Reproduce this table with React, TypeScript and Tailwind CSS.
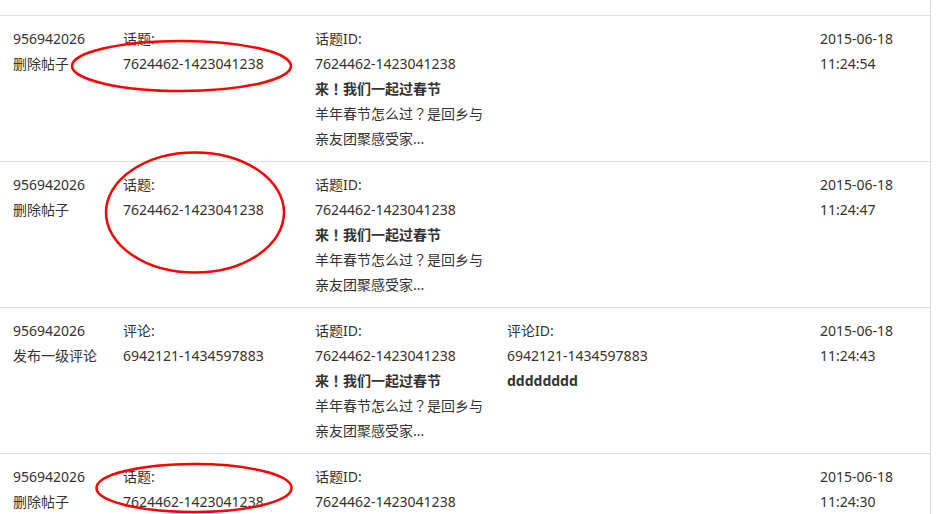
import type React from "react"

interface Post {
  uid: string
  action: string
  label: string
  labelId: string
  topicId: string
  title: string
  summary: string[]
  commentId?: string
  comment?: string
  date: string
  time: string
}

const posts: Post[] = [
  {
    uid: "956942026",
    action: "删除帖子",
    label: "话题:",
    labelId: "7624462-1423041238",
    topicId: "7624462-1423041238",
    title: "来！我们一起过春节",
    summary: ["羊年春节怎么过？是回乡与", "亲友团聚感受家..."],
    date: "2015-06-18",
    time: "11:24:54",
  },
  {
    uid: "956942026",
    action: "删除帖子",
    label: "话题:",
    labelId: "7624462-1423041238",
    topicId: "7624462-1423041238",
    title: "来！我们一起过春节",
    summary: ["羊年春节怎么过？是回乡与", "亲友团聚感受家..."],
    date: "2015-06-18",
    time: "11:24:47",
  },
  {
    uid: "956942026",
    action: "发布一级评论",
    label: "评论:",
    labelId: "6942121-1434597883",
    topicId: "7624462-1423041238",
    title: "来！我们一起过春节",
    summary: ["羊年春节怎么过？是回乡与", "亲友团聚感受家..."],
    commentId: "6942121-1434597883",
    comment: "dddddddd",
    date: "2015-06-18",
    time: "11:24:43",
  },
  {
    uid: "956942026",
    action: "删除帖子",
    label: "话题:",
    labelId: "7624462-1423041238",
    topicId: "7624462-1423041238",
    title: "来！我们一起过春节",
    summary: ["羊年春节怎么过？是回乡与", "亲友团聚感受家..."],
    date: "2015-06-18",
    time: "11:24:30",
  },
]

// full-width ！ and ？ sit centred in the reference, as in the JP cut
const Cjk = ({ text }: { text: string }) => (
  <>
    {text.split(/([！？])/).map((part, i) =>
      part === "！" || part === "？" ? (
        <span key={i} style={{ fontFamily: '"Noto Sans CJK JP", sans-serif' }}>
          {part}
        </span>
      ) : (
        part
      )
    )}
  </>
)

const Row = ({ post }: { post: Post }) => (
  <div className="grid grid-cols-[110px_192px_192px_313px_1fr] pl-[13px] py-[10px] border-b border-[#dddddd]">
    <div>
      <div>{post.uid}</div>
      <div>{post.action}</div>
    </div>
    <div>
      <div>{post.label}</div>
      <div>{post.labelId}</div>
    </div>
    <div>
      <div>话题ID:</div>
      <div>{post.topicId}</div>
      <div className="font-bold">
        <Cjk text={post.title} />
      </div>
      {post.summary.map((s) => (
        <div key={s}>
          <Cjk text={s} />
        </div>
      ))}
    </div>
    <div>
      {post.commentId && (
        <>
          <div>评论ID:</div>
          <div>{post.commentId}</div>
          <div className="font-bold">{post.comment}</div>
        </>
      )}
    </div>
    <div>
      <div>{post.date}</div>
      <div>{post.time}</div>
    </div>
  </div>
)

const marks: React.SVGProps<SVGEllipseElement>[] = [
  { cx: 181.5, cy: 66, rx: 109.5, ry: 25 },
  { cx: 195, cy: 212.5, rx: 89, ry: 60 },
  { cx: 194, cy: 488, rx: 97.5, ry: 24 },
]

export default function App() {
  return (
    <div
      className="relative w-[939px] h-[514px] overflow-hidden bg-white text-[14px] leading-[25px] text-[#333333]"
      style={{ fontFamily: '"Noto Sans", "Noto Sans CJK SC", sans-serif' }}
    >
      <div className="w-[931px] h-full border-r border-[#dddddd]">
        <div className="h-[16px] border-b border-[#dddddd]" />
        {posts.map((p, i) => (
          <Row key={i} post={p} />
        ))}
      </div>
      <svg className="absolute inset-0 pointer-events-none" width={939} height={514}>
        {marks.map((m, i) => (
          <ellipse key={i} {...m} fill="none" stroke="#ff0000" strokeWidth={2.5} />
        ))}
      </svg>
    </div>
  )
}
